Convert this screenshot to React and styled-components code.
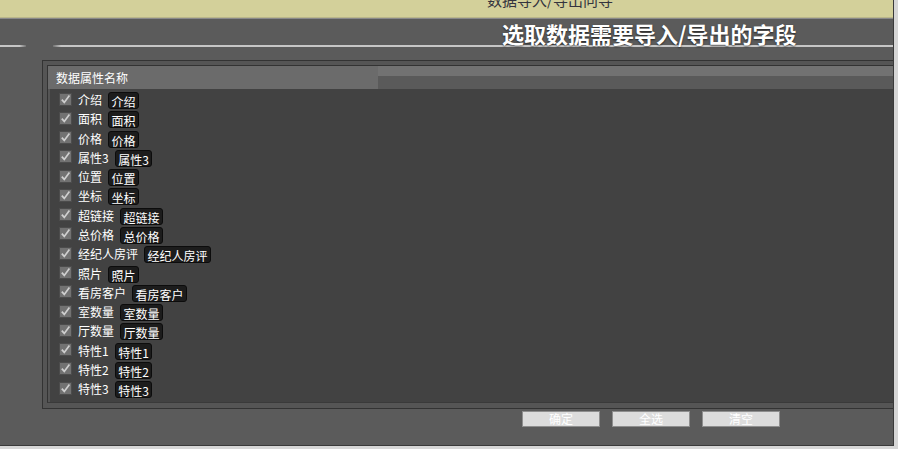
import React from "react";
import styled, { createGlobalStyle } from "styled-components";

const Global = createGlobalStyle`
  html, body { margin: 0; padding: 0; background: #d6d6d6; }
  body { font-family: "Noto Sans CJK SC", "Noto Sans", sans-serif; }
  * { box-sizing: border-box; }
`;

const Window = styled.div`
  width: 894px;
  height: 446px;
  background: #5b5b5b;
  border-right: 1px solid #3a3a3a;
  border-bottom: 1px solid #3a3a3a;
  overflow: hidden;
  display: flex;
  flex-direction: column;
`;

const TopBar = styled.div`
  height: 18px;
  flex: none;
  background: #d3d09a;
  border-bottom: 1px solid #b9b68a;
  box-shadow: 0 1px 0 #8a8a8a;
  overflow: hidden;
  padding-left: 487px;
`;

const TopTitle = styled.div`
  font-size: 15px;
  line-height: 18px;
  margin-top: -9px;
  color: #34343e;
  white-space: nowrap;
`;

const HeadingRow = styled.div`
  height: 27px;
  flex: none;
  padding-left: 502px;
  display: flex;
  align-items: flex-end;
`;

const Heading = styled.h1`
  margin: 0 0 -1px 0;
  font-size: 22px;
  line-height: 26px;
  font-weight: 700;
  color: #ffffff;
  white-space: nowrap;
  text-shadow: 0 1px 2px rgba(0, 0, 0, 0.6);
  position: relative;
  z-index: 1;
`;

const DividerRow = styled.div`
  height: 2px;
  flex: none;
  display: flex;
  gap: 27px;
`;

const DividerSeg = styled.div`
  height: 2px;
  width: ${(p) => p.$w || "auto"};
  flex: ${(p) => (p.$w ? "none" : "1")};
  background: ${(p) =>
    p.$fade === "right"
      ? "linear-gradient(to right, #c6c6c6 75%, rgba(198,198,198,0.2))"
      : "linear-gradient(to right, rgba(198,198,198,0.2), #c6c6c6 8px)"};
`;

const Panel = styled.div`
  margin: 13px 0 0 42px;
  height: 349px;
  flex: none;
  border: 1px solid #333;
  border-right: none;
  background: #555;
  padding: 4px 0 5px 4px;
  display: flex;
`;

const PanelInner = styled.div`
  flex: 1;
  border-top: 1px solid #333;
  border-left: 1px solid #333;
  border-bottom: 1px solid #3a3a3a;
  display: flex;
  flex-direction: column;
`;

const PanelHeader = styled.div`
  height: 23px;
  flex: none;
  padding-left: 8px;
  display: flex;
  align-items: center;
  color: #fff;
  font-size: 12px;
  background:
    linear-gradient(to right, #6b6b6b 0 330px, transparent 330px),
    linear-gradient(to bottom, #727272 0 10px, #5a5a5a 10px);
`;

const Content = styled.div`
  flex: 1;
  background: #424242;
  border-left: 2px solid #555;
  padding: 1px 0 0 9px;
  display: grid;
  grid-auto-rows: 19.27px;
  align-content: start;
`;

const Row = styled.div`
  display: flex;
  align-items: center;
`;

const Check = styled.span`
  width: 13px;
  height: 13px;
  flex: none;
  background: #727272;
  border: 1px solid #4c4c4c;
  display: flex;
  align-items: center;
  justify-content: center;
  margin-top: -1px;
`;

const Label = styled.span`
  margin-left: 6px;
  color: #fff;
  font-size: 12px;
  line-height: 15px;
  white-space: nowrap;
`;

const Badge = styled.span`
  margin-left: 6px;
  background: #1c1c1c;
  border: 1px solid #0c0c0c;
  border-radius: 3px;
  padding: 1px 2.5px 0;
  height: 17px;
  color: #fff;
  font-size: 12px;
  line-height: 15px;
  white-space: nowrap;
  margin-top: 2px;
`;

const ButtonRow = styled.div`
  margin: 2px 0 0 522px;
  display: flex;
  gap: 12px;
`;

const Button = styled.button`
  width: 78px;
  height: 16px;
  padding: 0;
  background: #dcdcdc;
  border: 1px solid #8e8e8e;
  color: #ffffff;
  font-family: "Noto Sans CJK SC", sans-serif;
  font-size: 12px;
  line-height: 14px;
`;

const fields = [
  "介绍",
  "面积",
  "价格",
  "属性3",
  "位置",
  "坐标",
  "超链接",
  "总价格",
  "经纪人房评",
  "照片",
  "看房客户",
  "室数量",
  "厅数量",
  "特性1",
  "特性2",
  "特性3",
];

const CheckMark = () => (
  <svg width="11" height="11" viewBox="0 0 11 11">
    <path d="M1.8 5.6 L4.3 8.4 L9.4 1.6" fill="none" stroke="#cfcfcf" strokeWidth="1.7" />
  </svg>
);

export default function App() {
  return (
    <>
      <Global />
      <Window>
        <TopBar>
          <TopTitle>数据导入/导出向导</TopTitle>
        </TopBar>
        <HeadingRow>
          <Heading>选取数据需要导入/导出的字段</Heading>
        </HeadingRow>
        <DividerRow>
          <DividerSeg $w="26px" $fade="right" />
          <DividerSeg $fade="left" />
        </DividerRow>
        <Panel>
          <PanelInner>
            <PanelHeader>数据属性名称</PanelHeader>
            <Content>
              {fields.map((f) => (
                <Row key={f}>
                  <Check>
                    <CheckMark />
                  </Check>
                  <Label>{f}</Label>
                  <Badge>{f}</Badge>
                </Row>
              ))}
            </Content>
          </PanelInner>
        </Panel>
        <ButtonRow>
          <Button>确定</Button>
          <Button>全选</Button>
          <Button>清空</Button>
        </ButtonRow>
      </Window>
    </>
  );
}
